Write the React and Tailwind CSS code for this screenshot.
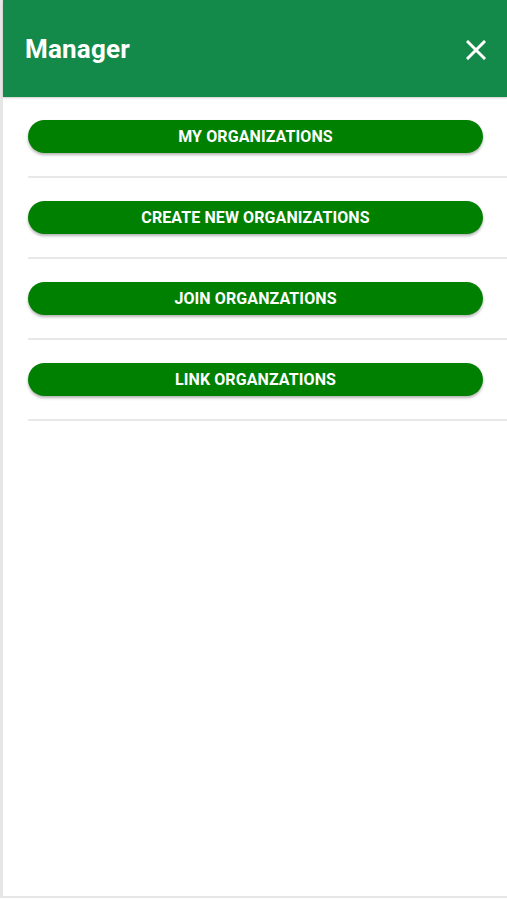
import React from 'react';

const items = [
  "MY ORGANIZATIONS",
  "CREATE NEW ORGANIZATIONS",
  "JOIN ORGANZATIONS",
  "LINK ORGANZATIONS",
];

const App = () => {
  return (
    <div className="h-[900px] w-[507px] bg-white font-['Roboto',sans-serif]">
      <div className="flex h-[898px] flex-col border-b-2 border-l-[3px] border-[#e6e6e6] bg-white">
        {/* header */}
        <div className="flex h-[97px] items-center justify-between bg-[#148a4a] pl-[22px] pr-[19px] pt-[2px] shadow-[0_1px_2px_rgba(0,0,0,0.2)]">
          <h1 className="text-[26px] font-bold tracking-[0.2px] text-white">Manager</h1>
          <button className="flex h-[24px] w-[24px] items-center justify-center text-white">
            <svg width="20" height="20" viewBox="0 0 20 20" fill="none" stroke="currentColor" strokeWidth="3" strokeLinecap="square">
              <path d="M2 2 L18 18 M18 2 L2 18" />
            </svg>
          </button>
        </div>

        {/* menu list */}
        <div className="flex flex-col pl-[25px] pt-[23px]">
          {items.map((item) => (
            <div key={item} className="flex flex-col">
              <button className="mr-[24px] flex h-[33px] items-center justify-center rounded-full bg-[#008000] text-[16px] font-bold tracking-[0.1px] text-white shadow-[0_2px_3px_rgba(0,0,0,0.3)]">
                {item}
              </button>
              <div className="mt-[23px] mb-[23px] h-[2px] bg-[#e8e8e8]"></div>
            </div>
          ))}
        </div>
      </div>
    </div>
  );
};

export default App;
